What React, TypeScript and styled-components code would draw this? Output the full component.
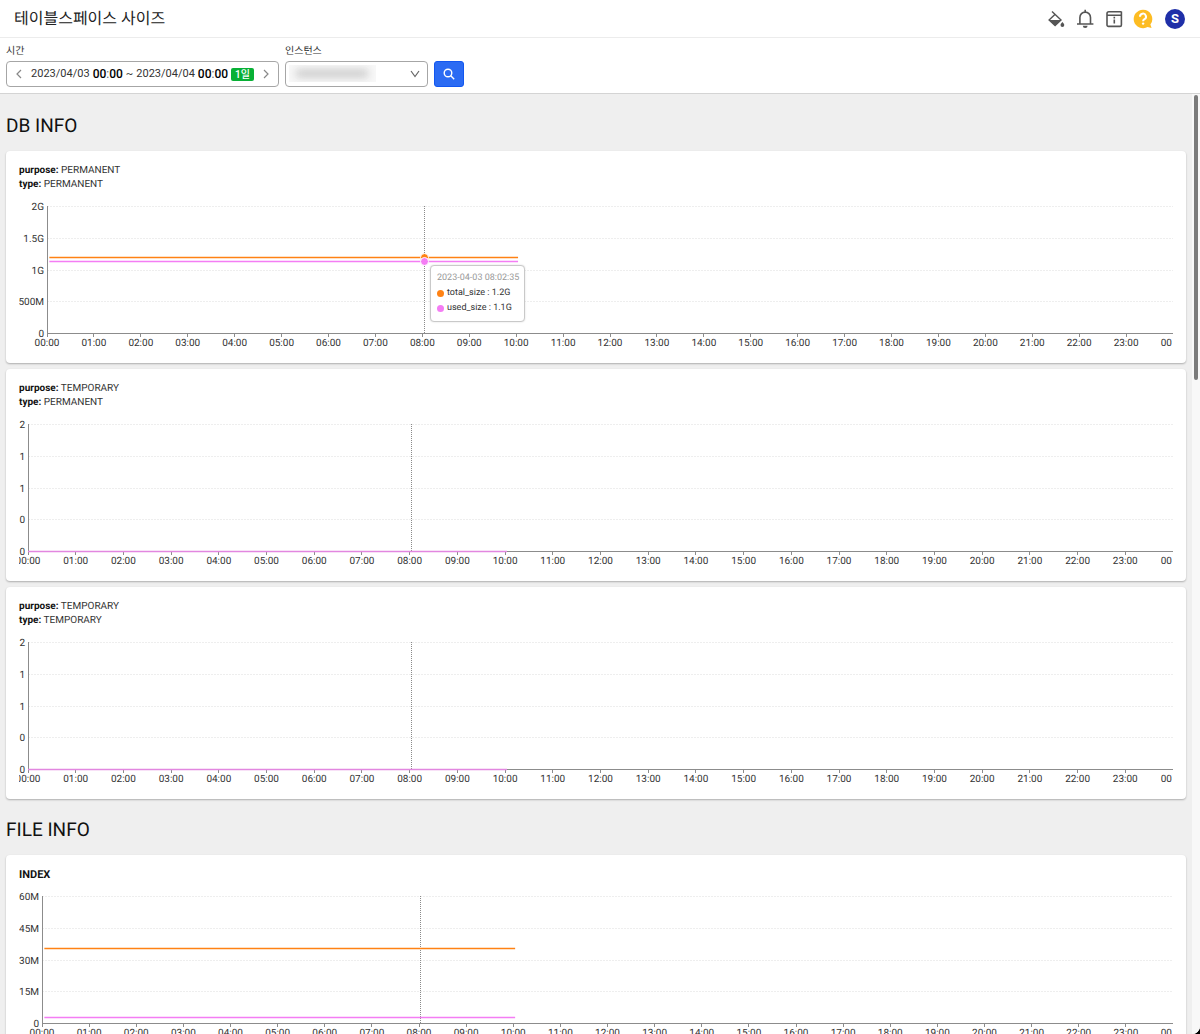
import React, { useLayoutEffect, useRef, useState } from 'react';
import styled, { createGlobalStyle } from 'styled-components';

const GlobalStyle = createGlobalStyle`
  * { box-sizing: border-box; }
  body {
    margin: 0;
    background: #000;
    color: #222;
    font-family: Roboto, "Noto Sans CJK KR", sans-serif;
    font-size: 10px;
    text-rendering: geometricPrecision;
  }
  button, select { font: inherit; color: inherit; }
  h1, h2, h3, p { margin: 0; }
`;

const Page = styled.div`
  display: flex;
  flex-direction: column;
  height: 100vh;
  overflow: hidden;
  background: #fff;
  border-bottom-right-radius: 8px;
`;

const Header = styled.header`
  display: flex;
  align-items: center;
  justify-content: space-between;
  height: 38px;
  padding: 0 15px 0 14px;
  border-bottom: 1px solid #ececec;
`;

const PageTitle = styled.h1`
  font-size: 16px;
  font-weight: 400;
  line-height: 20px;
  color: #222;
`;

const HeaderActions = styled.nav`
  display: flex;
  align-items: center;
  gap: 9px;
`;

const IconButton = styled.button`
  display: grid;
  place-items: center;
  width: 20px;
  height: 20px;
  padding: 0;
  border: 0;
  background: none;
  color: #555;
  cursor: pointer;
`;

const Avatar = styled.button`
  width: 20px;
  height: 20px;
  margin-left: 3px;
  padding: 0;
  border: 0;
  border-radius: 50%;
  background: #1f2fa8;
  color: #fff;
  font-size: 13px;
  font-weight: 700;
  line-height: 20px;
  cursor: pointer;
`;

const FilterBar = styled.form`
  display: flex;
  align-items: flex-end;
  gap: 6px;
  padding: 7px 6px 6px;
  border-bottom: 1px solid #d4d4d4;
`;

const Field = styled.div`
  display: flex;
  flex-direction: column;
  gap: 3px;
`;

const FieldLabel = styled.label`
  font-size: 10px;
  line-height: 13px;
  color: #333;
`;

const RangeBox = styled.div`
  display: flex;
  align-items: center;
  justify-content: space-between;
  width: 273px;
  height: 26px;
  padding: 0 5px;
  border: 1px solid #a6a6a6;
  border-radius: 4px;
`;

const StepButton = styled.button`
  display: grid;
  place-items: center;
  width: 14px;
  height: 20px;
  padding: 0;
  border: 0;
  background: none;
  color: #888;
`;

const RangeButton = styled.button`
  display: flex;
  align-items: center;
  gap: 3px;
  padding: 0;
  border: 0;
  background: none;
  font-size: 11px;
  line-height: 14px;
  color: #333;
`;

const Clock = styled.time`
  font-size: 12px;
  font-weight: 500;
  color: #000;

  i { font-style: normal; font-weight: 400; color: #666; }
`;

const Badge = styled.span`
  padding: 0 4px;
  border-radius: 2px;
  background: #08b035;
  color: #fff;
  font-size: 10px;
  font-weight: 500;
  line-height: 13px;
`;

const SelectBox = styled.div`
  position: relative;
  width: 143px;
  height: 26px;
  color: #666;

  > svg {
    position: absolute;
    top: 8px;
    right: 8px;
    pointer-events: none;
  }
`;

const Select = styled.select`
  appearance: none;
  width: 100%;
  height: 100%;
  border: 1px solid #a6a6a6;
  border-radius: 4px;
  background: #fff;
`;

const MaskedValue = styled.span`
  position: absolute;
  top: 4px;
  left: 4px;
  width: 87px;
  height: 17px;
  overflow: hidden;
  background: #f8f8f8;
  pointer-events: none;

  &::before {
    content: "";
    display: block;
    width: 72px;
    height: 7px;
    margin: 5px 7px;
    background: #c4c4c4;
    filter: blur(4px);
  }
`;

const SearchButton = styled.button`
  display: grid;
  place-items: center;
  width: 30px;
  height: 26px;
  padding: 0;
  border: 1px solid #1257f0;
  border-radius: 3px;
  background: #2b6bf3;
  color: #fff;
`;

const Body = styled.div`
  display: flex;
  flex: 1;
  min-height: 0;
  background: #efefef;
`;

const Scroller = styled.main`
  flex: 1;
  min-width: 0;
  overflow-y: auto;
  padding: 0 6px 6px;
  scrollbar-width: none;
`;

const ScrollTrack = styled.div`
  width: 8px;
  padding: 1px 2px;
  background: #f8f8f8;
`;

const ScrollThumb = styled.div`
  height: 30.4%;
  border-radius: 2px;
  background: #7b7b7b;
`;

const SectionTitle = styled.h2`
  padding: 19px 0 13px;
  font-size: 19px;
  font-weight: 400;
  line-height: 24px;
  color: #111;
`;

const CardList = styled.div`
  display: flex;
  flex-direction: column;
  gap: 6px;
`;

const Section = styled.section`
  &:first-child { padding-top: 1px; }
`;

const Card = styled.article`
  padding: 13px 13px 12px;
  border-radius: 4px;
  background: #fff;
  box-shadow: 0 1px 2px rgba(0, 0, 0, 0.28);
`;

const CardMeta = styled.p`
  font-size: 10px;
  line-height: 14px;
  color: #333;

  b { font-weight: 700; color: #111; }
`;

const CardTitle = styled.h3`
  font-size: 11px;
  font-weight: 700;
  line-height: 14px;
  color: #111;
`;

const ChartBox = styled.div`
  position: relative;
`;

const ChartSvg = styled.svg`
  display: block;
  width: 100%;
  overflow: hidden;

  text { font-size: 10px; fill: #333; }
`;

const Tooltip = styled.div`
  position: absolute;
  padding: 5px 5px 5px 6px;
  border: 1px solid #c9c9c9;
  border-radius: 4px;
  background: #fff;
  box-shadow: 0 0 2px rgba(0, 0, 0, 0.15);
  font-size: 9px;
  line-height: 15px;
  white-space: nowrap;
  color: #333;
`;

const TooltipTime = styled.div`
  color: #999;
`;

const TooltipRow = styled.div<{ $color: string }>`
  display: flex;
  align-items: center;
  gap: 3px;

  &::before {
    content: "";
    width: 7px;
    height: 7px;
    border-radius: 50%;
    background: ${(p) => p.$color};
  }
`;

const ORANGE = '#ff8214';
const PINK = '#f47df4';
const PLOT_TOP = 14;
const PLOT_HEIGHT = 127;
const PLOT_BOTTOM = PLOT_TOP + PLOT_HEIGHT;
const CHART_HEIGHT = 159;
const CURSOR_HOUR = 8.04;
const LAST_HOUR = 10.04;

type Series = { name: string; ratio: number; color: string; value?: string };
type ChartProps = { labels: string[]; axis: number; series: Series[]; tooltip?: string };

const hourLabel = (hour: number) => `${String(hour).padStart(2, '0')}:00`;

function Chart({ labels, axis, series, tooltip }: ChartProps) {
  const box = useRef<HTMLDivElement>(null);
  const [width, setWidth] = useState(1154);

  useLayoutEffect(() => {
    const node = box.current;
    if (!node) return;
    const observer = new ResizeObserver(() => setWidth(node.clientWidth));
    observer.observe(node);
    setWidth(node.clientWidth);
    return () => observer.disconnect();
  }, []);

  const x = (hour: number) => axis + ((width - axis) / 24) * hour;
  const y = (ratio: number) => PLOT_BOTTOM - PLOT_HEIGHT * ratio;
  const cursor = Math.floor(x(CURSOR_HOUR)) + 0.5;

  return (
    <ChartBox ref={box}>
      <ChartSvg height={CHART_HEIGHT} role="img" aria-label={series.map((s) => s.name).join(', ')}>
        {labels.map((label, i) => {
          const gy = Math.round(PLOT_TOP + (PLOT_HEIGHT * i) / 4) + 0.5;
          return (
            <g key={i}>
              {i < 4 && <line x1={axis} x2={width} y1={gy} y2={gy} stroke="#eeeeee" strokeDasharray="2 1" />}
              <text x={axis - 3} y={gy + 3} textAnchor="end">{label}</text>
            </g>
          );
        })}
        <line x1={axis + 0.5} x2={axis + 0.5} y1={PLOT_TOP} y2={PLOT_BOTTOM + 4} stroke="#8c8c8c" />
        <line x1={axis} x2={width} y1={PLOT_BOTTOM + 0.5} y2={PLOT_BOTTOM + 0.5} stroke="#8c8c8c" />
        {Array.from({ length: 24 }, (_, h) => {
          const tx = Math.floor(x(h)) + 0.5;
          return (
            <g key={h}>
              {h > 0 && <line x1={tx} x2={tx} y1={PLOT_BOTTOM} y2={PLOT_BOTTOM + 4} stroke="#8c8c8c" />}
              <text x={x(h)} y={PLOT_BOTTOM + 13} textAnchor="middle">{hourLabel(h)}</text>
            </g>
          );
        })}
        <text x={width - 1} y={PLOT_BOTTOM + 13} textAnchor="end">00</text>
        <line x1={cursor} x2={cursor} y1={PLOT_TOP} y2={PLOT_BOTTOM} stroke="#8a8a8a" strokeDasharray="1 1" />
        {series.map((s) => {
          const sy = Math.floor(y(s.ratio)) + 0.5;
          return (
            <g key={s.name}>
              <line
                x1={x(s.ratio ? 0.05 : 0)}
                x2={x(LAST_HOUR)}
                y1={sy}
                y2={sy}
                stroke={s.color}
                strokeWidth={1.4}
              />
              {tooltip && <circle cx={cursor} cy={sy} r={4} fill={s.color} stroke="#fff" />}
            </g>
          );
        })}
      </ChartSvg>
      {tooltip && (
        <Tooltip role="tooltip" style={{ left: Math.floor(cursor) + 6, top: Math.round(y(0.535)) }}>
          <TooltipTime>{tooltip}</TooltipTime>
          {series.map((s) => (
            <TooltipRow key={s.name} $color={s.color}>
              {s.name} : {s.value}
            </TooltipRow>
          ))}
        </Tooltip>
      )}
    </ChartBox>
  );
}

const Chevron = ({ d, w, h }: { d: string; w: number; h: number }) => (
  <svg width={w} height={h} viewBox={`0 0 ${w} ${h}`} fill="none" stroke="currentColor" strokeWidth="1.2">
    <path d={d} />
  </svg>
);

const FillIcon = () => (
  <svg width="20" height="20" viewBox="0 0 20 20" fill="none" stroke="currentColor" strokeWidth="1.4">
    <path d="M6 2.4l9 8.6-5.9 5.6-6-5.6 5.8-5.5" />
    <path d="M3 11h12.2l-6.1 5.8z" fill="currentColor" stroke="none" />
    <path d="M16.4 13c1.3 1.5 1.9 2.1 1.9 3.1a1.9 1.9 0 0 1-3.8 0c0-1 .6-1.6 1.9-3.1z" fill="currentColor" stroke="none" />
  </svg>
);

const BellIcon = () => (
  <svg width="20" height="20" viewBox="0 0 20 20" fill="none" stroke="currentColor" strokeWidth="1.6">
    <path d="M2 15h16.4M4.9 15V8.4a5.3 5.3 0 0 1 10.6 0V15M10.2 3.2V.8" />
    <path d="M7.8 16.8h4.8a2.4 2.2 0 0 1-4.8 0z" fill="currentColor" stroke="none" />
  </svg>
);

const InfoIcon = () => (
  <svg width="20" height="20" viewBox="0 0 20 20" fill="none" stroke="currentColor" strokeWidth="1.6">
    <path d="M17.4 6V16a1.4 1.4 0 0 1-1.4 1.4H4.4A1.4 1.4 0 0 1 3 16V4.6A1.8 1.8 0 0 1 4.8 2.8h12.6M3 6.2h14.4V2.4M10.3 10.4v4.2M10.3 7.8v1.6" />
  </svg>
);

const HelpIcon = () => (
  <svg width="20" height="20" viewBox="0 0 20 20" fill="none">
    <path d="M10 .8a9.2 9.2 0 1 0 4.6 17.1l4 1-1.2-3.4A9.2 9.2 0 0 0 10 .8z" fill="#fdbc22" />
    <path d="M7 7.8a3 3 0 1 1 4.5 2.4c-1.1.7-1.4 1.1-1.4 2" stroke="#fff" strokeWidth="2" />
    <circle cx="10.1" cy="14.6" r="1.2" fill="#fff" />
  </svg>
);

const SearchIcon = () => (
  <svg width="12" height="12" viewBox="0 0 12 12" fill="none" stroke="currentColor" strokeWidth="1.4">
    <circle cx="5" cy="5" r="3.8" />
    <path d="M7.8 7.8l3.4 3.4" />
  </svg>
);

const sizeSeries = (total: number, used: number): Series[] => [
  { name: 'total_size', ratio: total, color: ORANGE, value: '1.2G' },
  { name: 'used_size', ratio: used, color: PINK, value: '1.1G' },
];

const EMPTY_SERIES: Series[] = [{ name: 'used_size', ratio: 0, color: '#e287e0' }];

const DB_CHARTS = [
  {
    purpose: 'PERMANENT',
    type: 'PERMANENT',
    axis: 28,
    labels: ['2G', '1.5G', '1G', '500M', '0'],
    tooltip: '2023-04-03 08:02:35',
    series: sizeSeries(0.595, 0.56),
  },
  { purpose: 'TEMPORARY', type: 'PERMANENT', axis: 9, labels: ['2', '1', '1', '0', '0'], series: EMPTY_SERIES },
  { purpose: 'TEMPORARY', type: 'TEMPORARY', axis: 9, labels: ['2', '1', '1', '0', '0'], series: EMPTY_SERIES },
];

export default function App() {
  const [scroll, setScroll] = useState(0);

  const onScroll = (e: React.UIEvent<HTMLElement>) => {
    const el = e.currentTarget;
    const range = el.scrollHeight - el.clientHeight;
    setScroll(range > 0 ? (el.scrollTop / range) * el.clientHeight * 0.69 : 0);
  };

  return (
    <Page>
      <GlobalStyle />
      <Header>
        <PageTitle>테이블스페이스 사이즈</PageTitle>
        <HeaderActions>
          <IconButton aria-label="테마"><FillIcon /></IconButton>
          <IconButton aria-label="알림"><BellIcon /></IconButton>
          <IconButton aria-label="정보"><InfoIcon /></IconButton>
          <IconButton aria-label="도움말"><HelpIcon /></IconButton>
          <Avatar>S</Avatar>
        </HeaderActions>
      </Header>
      <FilterBar onSubmit={(e) => e.preventDefault()}>
        <Field>
          <FieldLabel htmlFor="range">시간</FieldLabel>
          <RangeBox>
            <StepButton type="button" aria-label="이전"><Chevron w={6} h={10} d="M5 1L1 5l4 4" /></StepButton>
            <RangeButton type="button" id="range">
              <span>2023/04/03</span>
              <Clock>00<i>:</i>00</Clock>
              <span>~</span>
              <span>2023/04/04</span>
              <Clock>00<i>:</i>00</Clock>
              <Badge>1일</Badge>
            </RangeButton>
            <StepButton type="button" aria-label="다음"><Chevron w={6} h={10} d="M1 1l4 4-4 4" /></StepButton>
          </RangeBox>
        </Field>
        <Field>
          <FieldLabel htmlFor="instance">인스턴스</FieldLabel>
          <SelectBox>
            <Select id="instance"><option value="" /></Select>
            <MaskedValue />
            <Chevron w={10} h={10} d="M1 2l4 5.5L9 2" />
          </SelectBox>
        </Field>
        <SearchButton aria-label="검색"><SearchIcon /></SearchButton>
      </FilterBar>
      <Body>
        <Scroller onScroll={onScroll}>
          <Section>
            <SectionTitle>DB INFO</SectionTitle>
            <CardList>
              {DB_CHARTS.map((c, i) => (
                <Card key={i}>
                  <CardMeta><b>purpose:</b> {c.purpose}</CardMeta>
                  <CardMeta><b>type:</b> {c.type}</CardMeta>
                  <Chart axis={c.axis} labels={c.labels} tooltip={c.tooltip} series={c.series} />
                </Card>
              ))}
            </CardList>
          </Section>
          <Section>
            <SectionTitle>FILE INFO</SectionTitle>
            <CardList>
              <Card>
                <CardTitle>INDEX</CardTitle>
                <Chart axis={23} labels={['60M', '45M', '30M', '15M', '0']} series={sizeSeries(0.588, 0.045)} />
              </Card>
            </CardList>
          </Section>
        </Scroller>
        <ScrollTrack>
          <ScrollThumb style={{ transform: `translateY(${scroll}px)` }} />
        </ScrollTrack>
      </Body>
    </Page>
  );
}
